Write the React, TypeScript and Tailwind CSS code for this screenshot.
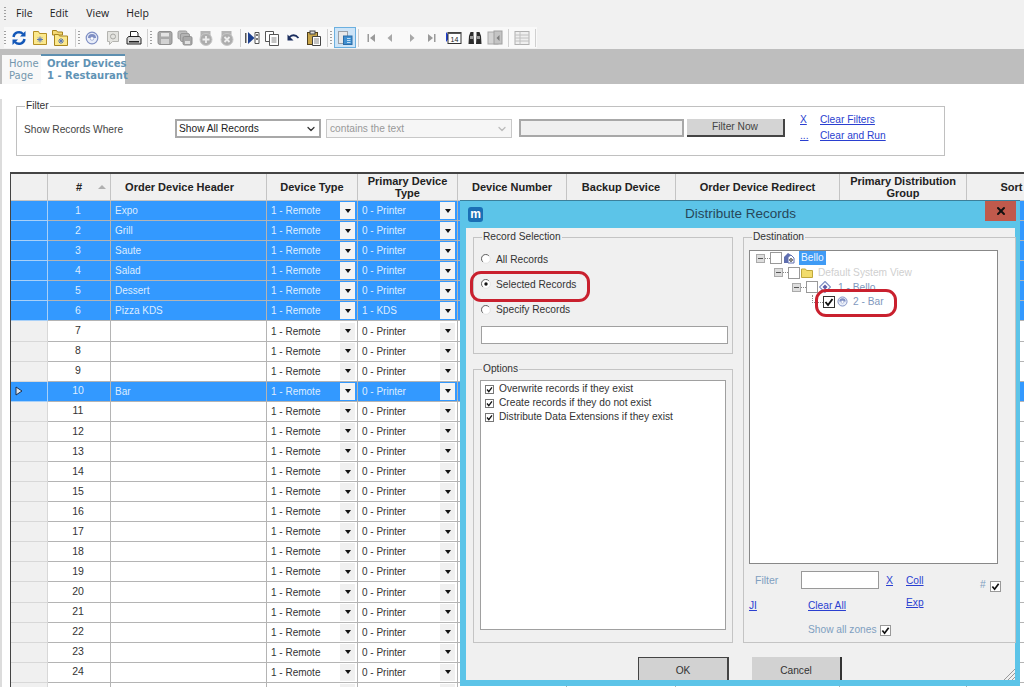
import { ChevronDown, X } from "lucide-react";

const uiFont = "font-['Liberation_Sans',Arial,sans-serif]";
const cols = "grid grid-cols-[37px_63px_156px_91px_100px_109px_109px_164px_127px_90px]";

const names = ["Expo", "Grill", "Saute", "Salad", "Dessert", "Pizza KDS", "", "", "", "Bar"];
const selectedRows = [1, 2, 3, 4, 5, 6, 10];
const rows = Array.from({ length: 25 }, (_, i) => ({
  n: i + 1,
  name: names[i] || "",
  primary: i === 5 ? "1 - KDS" : "0 - Printer",
  selected: selectedRows.includes(i + 1),
}));

const headers = [
  "",
  "#",
  "Order Device Header",
  "Device Type",
  "Primary Device Type",
  "Device Number",
  "Backup Device",
  "Order Device Redirect",
  "Primary Distribution Group",
  "Sort",
];

// Toolbar icons, all on a 16 box
const Svg = ({ children, className = "" }: { children: React.ReactNode; className?: string }) => (
  <svg viewBox="0 0 16 16" className={`w-4 h-4 shrink-0 ${className}`}>
    {children}
  </svg>
);

const Refresh = ({ className }: { className?: string }) => (
  <Svg className={className}>
    <path d="M2.500 7a5.500 5.500 0 0 1 9.500-3" fill="none" stroke="#1257b8" strokeWidth="2.400" />
    <path d="M13.500 9a5.500 5.500 0 0 1-9.500 3" fill="none" stroke="#1257b8" strokeWidth="2.400" />
    <path d="M14.500 1v5.500H9zM1.500 15V9.500H7z" fill="#1257b8" />
  </Svg>
);

const FolderStar = ({ className }: { className?: string }) => (
  <Svg className={className}>
    <path d="M1.500 1.500h5l1 2h7v11h-13z" fill="#fbe88c" stroke="#b58f24" />
    <path d="M8 6.500v6M5 9.500h6M6 7.500l4 4M10 7.500l-4 4" stroke="#5b78b8" strokeWidth="1" />
  </Svg>
);

const FoldersStar = ({ className }: { className?: string }) => (
  <Svg className={className}>
    <path d="M.5 .5h4l1 1.500h5V5H.5z" fill="#f4d874" stroke="#a8851f" />
    <path d="M2.500 4.500h4l1 1.500h8v9.500h-13z" fill="#fbe88c" stroke="#a8851f" />
    <path d="M9 8v6M6 11h6M7 9l4 4M11 9l-4 4" stroke="#5b78b8" strokeWidth="1" />
  </Svg>
);

const Target = ({ size = "w-3.5 h-3.5", className = "" }: { size?: string; className?: string }) => (
  <svg viewBox="0 0 14 14" className={`${size} shrink-0 ${className}`}>
    <circle cx="7" cy="7" r="5.800" fill="#e8edf8" stroke="#7f8fc4" strokeWidth="1.200" />
    <path d="M3 7a4 4 0 0 1 8 0z" fill="#7f8fc4" />
    <circle cx="7" cy="7.500" r="1.800" fill="#fff" stroke="#7f8fc4" strokeWidth=".6" />
  </svg>
);

const Comment = ({ className }: { className?: string }) => (
  <Svg className={className}>
    <path d="M2.500 1.500h11v10h-6l-3 3v-3h-2z" fill="#e4e4e0" stroke="#b4b4b0" />
    <circle cx="8" cy="6.500" r="2.500" fill="none" stroke="#a8a8a4" />
  </Svg>
);

const Printer = ({ className }: { className?: string }) => (
  <Svg className={className}>
    <path d="M4.500 7V1.500h6l1.500 1.500v4" fill="#fff" stroke="#222" />
    <path d="M1 8.500l1.500-2h11l1.500 2v5.500H1z" fill="#d8d8d8" stroke="#222" />
    <rect x="3" y="11" width="10" height="1.500" fill="#222" />
  </Svg>
);

const Save = ({ className }: { className?: string }) => (
  <Svg className={className}>
    <rect x="1" y="1.500" width="14" height="13" rx="2" fill="#a9a9a9" stroke="#8f8f8f" />
    <rect x="4" y="3" width="8" height="3.500" fill="#e4e4e4" />
    <rect x="4" y="9" width="8" height="5" fill="#d2d2d2" />
  </Svg>
);

const SaveStack = ({ className }: { className?: string }) => (
  <Svg className={className}>
    <rect x="1" y="1" width="9" height="8" rx="1.500" fill="#bdbdbd" stroke="#999" />
    <rect x="3.500" y="3.500" width="9" height="8" rx="1.500" fill="#b4b4b4" stroke="#999" />
    <rect x="6" y="6.500" width="9" height="8.500" rx="1.500" fill="#a9a9a9" stroke="#8f8f8f" />
    <rect x="8" y="11" width="5" height="3" fill="#e0e0e0" />
  </Svg>
);

const DocCircle = ({ cross, className }: { cross?: boolean; className?: string }) => (
  <Svg className={className}>
    <rect x="2.500" y="1" width="10" height="6" fill="#b4b4b4" />
    <circle cx="8" cy="9.500" r="6" fill="#adadad" stroke="#c8c8c8" />
    {cross ? (
      <path d="M5.500 7l5 5M10.500 7l-5 5" stroke="#eee" strokeWidth="1.800" />
    ) : (
      <path d="M8 6v7M4.500 9.500h7" stroke="#eee" strokeWidth="1.800" />
    )}
  </Svg>
);

const ArrowDoor = ({ className }: { className?: string }) => (
  <Svg className={className}>
    <path d="M1 3h1.500v10H1z" fill="#555" />
    <path d="M4 2l6.500 6L4 14z" fill="#1c3f8f" />
    <path d="M11 2.500h4v11h-4z" fill="#fff" stroke="#555" />
    <rect x="12" y="4" width="2" height="2" fill="#777" />
    <rect x="12" y="8" width="2" height="2" fill="#777" />
  </Svg>
);

const Docs = ({ className }: { className?: string }) => (
  <Svg className={className}>
    <path d="M1.500 1.500h8v10h-8z" fill="#fff" stroke="#555" />
    <path d="M5.500 4.500h9v11h-9z" fill="#fff" stroke="#555" />
    <path d="M7.500 8h5M7.500 10h5M7.500 12h5" stroke="#888" />
  </Svg>
);

const Undo = ({ className }: { className?: string }) => (
  <Svg className={className}>
    <path d="M4.500 7c3-2.500 6-2.500 9 1" fill="none" stroke="#1c2f5f" strokeWidth="1.800" />
    <path d="M2.500 4.500v6h6z" fill="#1c2f5f" />
  </Svg>
);

const Clipboard = ({ className }: { className?: string }) => (
  <Svg className={className}>
    <rect x="1.500" y="2.500" width="10" height="12" fill="#c9a64a" stroke="#4f4020" />
    <rect x="4" y="1" width="5" height="3" fill="#ddd" stroke="#444" />
    <path d="M6.500 6.500h8v9h-8z" fill="#fff" stroke="#444" />
    <path d="M8 9h5M8 11h5M8 13h5" stroke="#888" />
  </Svg>
);

const PanelIcon = () => (
  <Svg>
    <rect x="1.500" y="1.500" width="9" height="12" fill="#e8e8e8" stroke="#9aa0a8" />
    <rect x="6.500" y="6" width="8.500" height="8.500" fill="#3f8fd0" stroke="#2a6ca8" />
    <path d="M10 8.500h3.500M10 10.500h3.500M10 12.500h3.500" stroke="#bcdcf4" />
  </Svg>
);

const Nav = ({ kind, className = "" }: { kind: "first" | "prev" | "next" | "last"; className?: string }) => (
  <svg viewBox="0 0 10 10" className={`w-2.5 h-2.5 shrink-0 ${className}`}>
    {kind === "first" && <path d="M1.500 1h1.500v8H1.500zM9 1v8L4 5z" fill="#9a9a9a" />}
    {kind === "prev" && <path d="M7 1v8L2.500 5z" fill="#a8a8a8" />}
    {kind === "next" && <path d="M3 1v8L7.500 5z" fill="#a8a8a8" />}
    {kind === "last" && <path d="M7 1h1.500v8H7zM1 1v8L6 5z" fill="#9a9a9a" />}
  </svg>
);

const Calendar = ({ className }: { className?: string }) => (
  <Svg className={className}>
    <path d="M0 2l4 5-4 5z" fill="#1f3fd0" />
    <rect x="2" y="2.500" width="13" height="11" fill="#fff" stroke="#333" />
    <rect x="2" y="2.500" width="13" height="1.500" fill="#555" />
    <text x="4.500" y="11.500" fontSize="7" fill="#222" fontFamily="Liberation Sans">
      14
    </text>
  </Svg>
);

const Binoculars = ({ className }: { className?: string }) => (
  <Svg className={className}>
    <path d="M2 6l1.500-4h3v4l.5 8H1.500zM14 6l-1.500-4h-3v4L9 14h5.500z" fill="#2b2b2b" />
    <rect x="3" y="6" width="3" height="3" fill="#9a9a9a" />
    <rect x="10" y="6" width="3" height="3" fill="#9a9a9a" />
  </Svg>
);

const DocGray = ({ className }: { className?: string }) => (
  <Svg className={className}>
    <rect x="1" y="2" width="10" height="12" fill="#d4d4d4" stroke="#aaa" />
    <rect x="7" y="1" width="8" height="13" fill="#c4c4c4" stroke="#a0a0a0" />
    <path d="M12.500 5v6l-3-3z" fill="#7d7d7d" />
  </Svg>
);

const TableGray = ({ className }: { className?: string }) => (
  <Svg className={className}>
    <rect x="1" y="1.500" width="14" height="13" fill="#efefef" stroke="#b0b0b0" />
    <path d="M1 5h14M1 8h14M1 11h14M6 1.500v13" stroke="#c0c0c0" />
  </Svg>
);

const Grip = ({ className = "" }: { className?: string }) => (
  <span className={`flex flex-col gap-[2px] shrink-0 ${className}`}>
    {[0, 1, 2, 3, 4].map((i) => (
      <span key={i} className="w-[2px] h-[1px] bg-[#a0a0a0]" />
    ))}
  </span>
);

const Sep = ({ className = "" }: { className?: string }) => (
  <span className={`w-px h-[18px] bg-[#d0d0d0] shrink-0 ${className}`} />
);

const DownTri = () => (
  <svg viewBox="0 0 6 4" className="w-[6px] h-[4px]">
    <path d="M0 0h6L3 4z" fill="#111" />
  </svg>
);

const Tick = ({ className = "" }: { className?: string }) => (
  <svg viewBox="0 0 10 10" className={className}>
    <path d="M1.500 5l2.500 3 4.500-6" fill="none" stroke="#111" strokeWidth="1.900" />
  </svg>
);

const Check = ({ box = "w-[9px] h-[9px] border-[#777]" }: { box?: string }) => (
  <span className={`flex items-center justify-center bg-white border shrink-0 ${box}`}>
    <Tick className="w-full h-full" />
  </span>
);

const Radio = ({ on }: { on?: boolean }) => (
  <svg viewBox="0 0 10 10" className="w-[10px] h-[10px] shrink-0">
    <circle cx="5" cy="5" r="4.300" fill="#fff" stroke="#e4e4e4" />
    <path d="M7.800 1.700A4.300 4.300 0 0 0 1.700 7.800" fill="none" stroke="#666" />
    {on && <circle cx="5" cy="5" r="1.700" fill="#111" />}
  </svg>
);

const Link = ({ children, className = "" }: { children: React.ReactNode; className?: string }) => (
  <span className={`underline text-[#2a3fd0] ${className}`}>{children}</span>
);

const Row = ({ row }: { row: (typeof rows)[number] }) => {
  const bg = row.selected ? "bg-[#3399ff]" : "bg-white";
  const fg = row.selected ? "text-[#dcecff]" : "text-[#333]";
  const cell = `border-r border-b border-[#b4b4b4] flex items-center overflow-hidden ${bg} ${fg}`;
  const visible = row.n < 25;
  const combo = (text: string) => (
    <div className={`${cell} pl-1 pr-[2px] justify-between`}>
      <span>{visible && text}</span>
      <span
        className={`w-[15px] h-[17px] flex items-center justify-center shrink-0 ${
          row.selected ? "bg-[#f4f4f4]" : "bg-[#f0f0f0]"
        }`}
      >
        {visible && <DownTri />}
      </span>
    </div>
  );

  return (
    <div className={`${cols} h-[20.087px]`}>
      <div
        className={`border-r border-b flex items-center pl-1 ${
          row.selected ? "bg-[#3399ff] border-[#a8d0f8]" : "bg-[#f0f0f0] border-[#d8d8d8]"
        }`}
      >
        {row.n === 10 && (
          <svg viewBox="0 0 8 10" className="w-2 h-2.5">
            <path d="M1 1l6 4-6 4z" fill="#dde4ea" stroke="#1c2f4f" />
          </svg>
        )}
      </div>
      <div className={`${cell} justify-center pr-[2px] text-[10.500px]`}>{visible && row.n}</div>
      <div className={`${cell} pl-1`}>{row.name}</div>
      {combo("1 - Remote")}
      {combo(row.primary)}
      <div className={cell} />
      <div className={cell} />
      <div className={cell} />
      <div className={cell} />
      <div className={cell} />
    </div>
  );
};

const TreeRow = ({
  indent,
  children,
  checked,
}: {
  indent: string;
  children: React.ReactNode;
  checked?: boolean;
}) => (
  <div className={`flex items-center h-[14.500px] ${indent}`}>
    {checked ? (
      <span className="ml-[3px] w-[11px] h-[8px] self-start border-l border-b border-dotted border-[#888] shrink-0" />
    ) : (
      <>
        <span className="w-[9px] h-[9px] bg-[#ddd] border border-[#aaa] flex items-center justify-center shrink-0">
          <span className="w-[5px] h-px bg-[#555]" />
        </span>
        <span className="w-[5px] border-t border-dotted border-[#888] shrink-0" />
      </>
    )}
    <span
      className={`w-[12px] h-[12px] border bg-white shrink-0 flex items-center justify-center ${
        checked ? "border-[#333]" : "border-[#999]"
      }`}
    >
      {checked && <Tick className="w-[10px] h-[10px]" />}
    </span>
    {children}
  </div>
);

export default function App() {
  return (
    <div className={`relative w-[1024px] h-[687px] overflow-hidden bg-white text-[10.200px] ${uiFont}`}>
      {/* Menu bar */}
      <div className="h-[27px] bg-[#f1f1f1] flex items-center pl-1 text-[#222] font-['Open_Sans',sans-serif] text-[10.500px]">
        <Grip />
        <span className="ml-[10px]">File</span>
        <span className="ml-[17px]">Edit</span>
        <span className="ml-[18px]">View</span>
        <span className="ml-[17px]">Help</span>
      </div>

      {/* Toolbar */}
      <div className="h-[22px] bg-[#f1f1f1] pl-1">
        <div className="w-[533px] h-[21px] bg-[#f9f9f9] flex items-center">
          <Grip />
          <Refresh className="ml-[5px]" />
          <FolderStar className="ml-[5px]" />
          <FoldersStar className="ml-1" />
          <Sep className="ml-[7px]" />
          <Grip className="ml-[2px]" />
          <Target className="ml-[5px]" />
          <Comment className="ml-[6px]" />
          <Printer className="ml-[5px]" />
          <Sep className="ml-[5px]" />
          <Grip className="ml-[2px]" />
          <Save className="ml-[5px]" />
          <SaveStack className="ml-1" />
          <DocCircle className="ml-[5px]" />
          <DocCircle cross className="ml-[5px]" />
          <Sep className="ml-[5px]" />
          <ArrowDoor className="ml-[3px]" />
          <Docs className="ml-1" />
          <Undo className="ml-[5px]" />
          <Clipboard className="ml-[5px]" />
          <Sep className="ml-[5px]" />
          <Grip className="ml-[2px]" />
          <div className="ml-[2px] w-[22px] h-[21px] bg-[#cde4f7] border border-[#6bb0e0] flex items-center justify-center shrink-0">
            <PanelIcon />
          </div>
          <Sep className="ml-[2px]" />
          <Nav kind="first" className="ml-[7px]" />
          <Nav kind="prev" className="ml-[9px]" />
          <Nav kind="next" className="ml-[12px]" />
          <Nav kind="last" className="ml-[10px]" />
          <Calendar className="ml-[9px]" />
          <Binoculars className="ml-[5px]" />
          <DocGray className="ml-1" />
          <Sep className="ml-[5px]" />
          <TableGray className="ml-[5px]" />
          <Sep className="ml-[5px]" />
        </div>
      </div>

      {/* Tabs */}
      <div className="h-[35px] bg-[#bebebe] flex items-end pl-[2px] font-['DejaVu_Sans',sans-serif] text-[10px] leading-[12px]">
        <div className="w-[39px] h-[29px] bg-[#f8f8f8] pl-[7px] pt-[3px] text-[#7497ad]">
          Home
          <br />
          Page
        </div>
        <div className="w-[84px] h-[30px] bg-white border-t-2 border-[#5d8fb0] pl-[6px] pt-[2px] font-bold text-[#5f93b5] whitespace-nowrap">
          Order Devices
          <br />1 - Restaurant
        </div>
      </div>

      <div className="border-l-2 border-[#dcdcdc] h-[603px]">
        {/* Filter */}
        <fieldset className="ml-[14px] mt-[15px] w-[929px] h-[57px] border border-[#c0c0c0] text-[#444] pl-[7px]">
          <legend className="ml-px px-[1px] h-[14px] leading-[14px] text-[#333]">Filter</legend>
          <div className="flex items-start mt-[6px]">
            <span className="w-[151px] pt-[3px] text-[#444] whitespace-nowrap">Show Records Where</span>
            <div className="w-[146px] h-[19px] border-2 border-[#a8a8a8] bg-white flex items-center justify-between px-[2px] text-[#222]">
              Show All Records
              <ChevronDown className="w-3 h-3 text-[#333]" strokeWidth={2.5} />
            </div>
            <div className="ml-[5px] w-[186px] h-[19px] border border-[#c8c8c8] bg-[#f6f6f6] flex items-center justify-between px-[3px] text-[#999]">
              contains the text
              <ChevronDown className="w-3 h-3 text-[#bbb]" strokeWidth={2.5} />
            </div>
            <div className="ml-[7px] w-[165px] h-[18px] border-2 border-[#a8a8a8] bg-[#f0f0f0]" />
            <div className="ml-[3px] w-[98px] h-[18px] bg-[#d4d4d4] border-r-2 border-b-2 border-[#444] flex items-center justify-center text-[#444]">
              Filter Now
            </div>
            <div className="ml-[15px] flex flex-col gap-[3px] mt-[-7px] text-[10.200px]">
              <div className="flex h-[13px]">
                <Link className="w-[20px]">X</Link>
                <Link>Clear Filters</Link>
              </div>
              <div className="flex h-[13px]">
                <Link className="w-[20px]">...</Link>
                <Link>Clear and Run</Link>
              </div>
            </div>
          </div>
        </fieldset>

        {/* Grid */}
        <div className="ml-[8px] mt-4 w-[1100px] border-t-2 border-l border-[#444] text-[10px] text-[#333]">
          <div className={`${cols} h-[27px] bg-[#f0f0f0] font-bold text-[11px] text-[#222]`}>
            {headers.map((h, i) => (
              <div
                key={i}
                className={`border-r border-b border-[#c4c4c4] flex items-center justify-center text-center leading-[12px] relative ${
                  i === 2 ? "pr-[18px]" : "px-2"
                }`}
              >
                {h}
                {h === "#" && (
                  <svg viewBox="0 0 8 4" className="absolute right-[4px] top-[11px] w-2 h-1">
                    <path d="M0 4l4-4 4 4z" fill="#b0b0b0" />
                  </svg>
                )}
              </div>
            ))}
          </div>
          {rows.map((row) => (
            <Row key={row.n} row={row} />
          ))}
        </div>
      </div>

      {/* Distribute Records window */}
      <div className="absolute left-[460px] top-[200px] w-[560px] h-[486px] bg-[#5cc4e8] border-t border-[#3b7f9a] flex flex-col text-[#333]">
        <div className="h-[27px] shrink-0 flex items-center pl-[8px] relative">
          <span className="w-[15px] h-[15px] rounded-[3px] bg-[#1a6fb5] text-white font-bold text-[12px] leading-[13px] flex items-center justify-center">
            m
          </span>
          <span className="flex-1 text-center text-[13.500px] text-[#27475a] pr-[22px]">Distribute Records</span>
          <span className="absolute right-[4px] top-0 w-[31px] h-[20px] bg-[#c05a4c] flex items-center justify-center">
            <X className="w-3 h-3 text-[#111]" strokeWidth={4} />
          </span>
        </div>
        <div className="mx-[6px] mr-[5px] h-[452px] bg-[#f0f0f0] flex gap-[10px] px-[7px] relative">
          {/* Left column */}
          <div className="w-[260px] shrink-0">
            <fieldset className="mt-[2px] h-[124px] border border-[#c4c4c4]">
              <legend className="ml-[8px] px-[1px] h-[14px] leading-[14px]">Record Selection</legend>
              <div className="flex flex-col pl-[7px] mt-[2px]">
                <label className="flex items-center gap-[5px] h-[25.500px] pt-[1px]">
                  <Radio />
                  All Records
                </label>
                <label className="flex items-center gap-[5px] h-[25.500px]">
                  <Radio on />
                  Selected Records
                </label>
                <label className="flex items-center gap-[5px] h-[25.500px]">
                  <Radio />
                  Specify Records
                </label>
                <div className="mt-[3px] w-[247px] h-[18px] bg-white border border-[#a0a0a0]" />
              </div>
            </fieldset>
            <fieldset className="mt-[8px] h-[281px] border border-[#c4c4c4]">
              <legend className="ml-[8px] px-[1px] h-[14px] leading-[14px]">Options</legend>
              <div className="ml-[6px] mt-[4px] w-[246px] h-[250px] bg-white border border-[#a0a0a0] pt-[1px] pl-[4px] flex flex-col">
                {[
                  "Overwrite records if they exist",
                  "Create records if they do not exist",
                  "Distribute Data Extensions if they exist",
                ].map((t) => (
                  <div key={t} className="flex items-center gap-[5px] h-[14px]">
                    <Check />
                    {t}
                  </div>
                ))}
              </div>
            </fieldset>
          </div>

          {/* Right column */}
          <div className="w-[262px] shrink-0">
            <fieldset className="mt-[2px] h-[413px] border border-[#c4c4c4]">
              <legend className="ml-[8px] px-[1px] h-[14px] leading-[14px]">Destination</legend>
              <div className="ml-[5px] mt-[6px] w-[249px] h-[314px] bg-white border border-[#888]">
                <TreeRow indent="ml-[6px]">
                  <svg viewBox="0 0 12 12" className="w-3 h-3 ml-px shrink-0">
                    <path d="M1 5l4-4 3 2v8H1z" fill="#5f6fb0" />
                    <path d="M5 5l3-2 3 3v5H5z" fill="#fff" stroke="#5f6fb0" />
                    <circle cx="8" cy="8" r="1.300" fill="none" stroke="#333" />
                  </svg>
                  <span className="ml-[4px] h-[14px] px-[2px] bg-[#3f9bf5] text-[#eef6ff] leading-[14px]">Bello</span>
                </TreeRow>
                <TreeRow indent="ml-[24px]">
                  <svg viewBox="0 0 12 10" className="w-3 h-2.5 ml-px shrink-0">
                    <path d="M.5 1h4l1 1.500h6v7H.5z" fill="#f2dc6c" stroke="#c0a83c" />
                  </svg>
                  <span className="ml-[5px] text-[#cfcfcf] whitespace-nowrap">Default System View</span>
                </TreeRow>
                <TreeRow indent="ml-[42px]">
                  <svg viewBox="0 0 12 12" className="w-3 h-3 ml-px shrink-0">
                    <path d="M6 .5L11.500 6 6 11.500.5 6z" fill="#fff" stroke="#7f8fc4" strokeWidth="1.200" />
                    <path d="M6 3.500L8.500 6 6 8.500 3.500 6z" fill="#5f5fa8" />
                  </svg>
                  <span className="ml-[7px] text-[#7f98bd]">1 - Bello</span>
                </TreeRow>
                <TreeRow indent="ml-[59px]" checked>
                  <Target size="w-[11px] h-[11px]" className="ml-[2px]" />
                  <span className="ml-[5px] text-[#7f98bd]">2 - Bar</span>
                </TreeRow>
              </div>
              <div className="grid grid-cols-[52px_84px_21px_74px_1fr] grid-rows-[19px_24px_32px] mt-[7px] ml-[5px] text-[#7f9fc0]">
                <span className="pl-[6px] self-center text-[10.500px]">Filter</span>
                <div className="w-[78px] h-[18px] bg-white border border-[#999]" />
                <Link className="pl-[1px] self-center text-[10.500px]">X</Link>
                <Link className="self-center">Coll</Link>
                <div className="flex items-end justify-end gap-[4px] pr-[14px] translate-y-[2px]">
                  #
                  <Check box="w-[11px] h-[11px] border-[#999]" />
                </div>
                <Link className="self-end mb-[1px]">JI</Link>
                <span className="col-span-2 self-end mb-[1px]">
                  <Link className="ml-[7px]">Clear All</Link>
                </span>
                <Link className="col-start-4 pt-[5px]">Exp</Link>
                <span />
                <span className="col-start-1 col-span-5 pl-[59px] flex items-center gap-[3px]">
                  Show all zones
                  <Check box="w-[11px] h-[11px] border-[#999]" />
                </span>
              </div>
            </fieldset>
          </div>

          {/* Bottom buttons */}
          <div className="absolute left-[172px] bottom-0 flex gap-[23px]">
            <div className="w-[91px] h-[23px] bg-[#d2d2d2] border-t border-l border-[#444] border-r-2 flex items-center justify-center pt-1">
              OK
            </div>
            <div className="w-[90px] h-[23px] bg-[#d2d2d2] border-r-2 border-[#333] flex items-center justify-center pt-1">
              Cancel
            </div>
          </div>

          {/* Resize grip */}
          <svg viewBox="0 0 12 12" className="absolute right-0 bottom-0 w-3 h-3">
            <path d="M12 1L1 12M12 5L5 12M12 9l-3 3" stroke="#999" />
          </svg>
        </div>
      </div>

      {/* Red annotations */}
      <div className="absolute left-[470px] top-[271px] w-[120px] h-[31px] border-[3.500px] border-[#c9202e] rounded-[11px]" />
      <div className="absolute left-[815px] top-[289px] w-[82px] h-[28px] border-[3.500px] border-[#c9202e] rounded-[11px]" />
    </div>
  );
}
